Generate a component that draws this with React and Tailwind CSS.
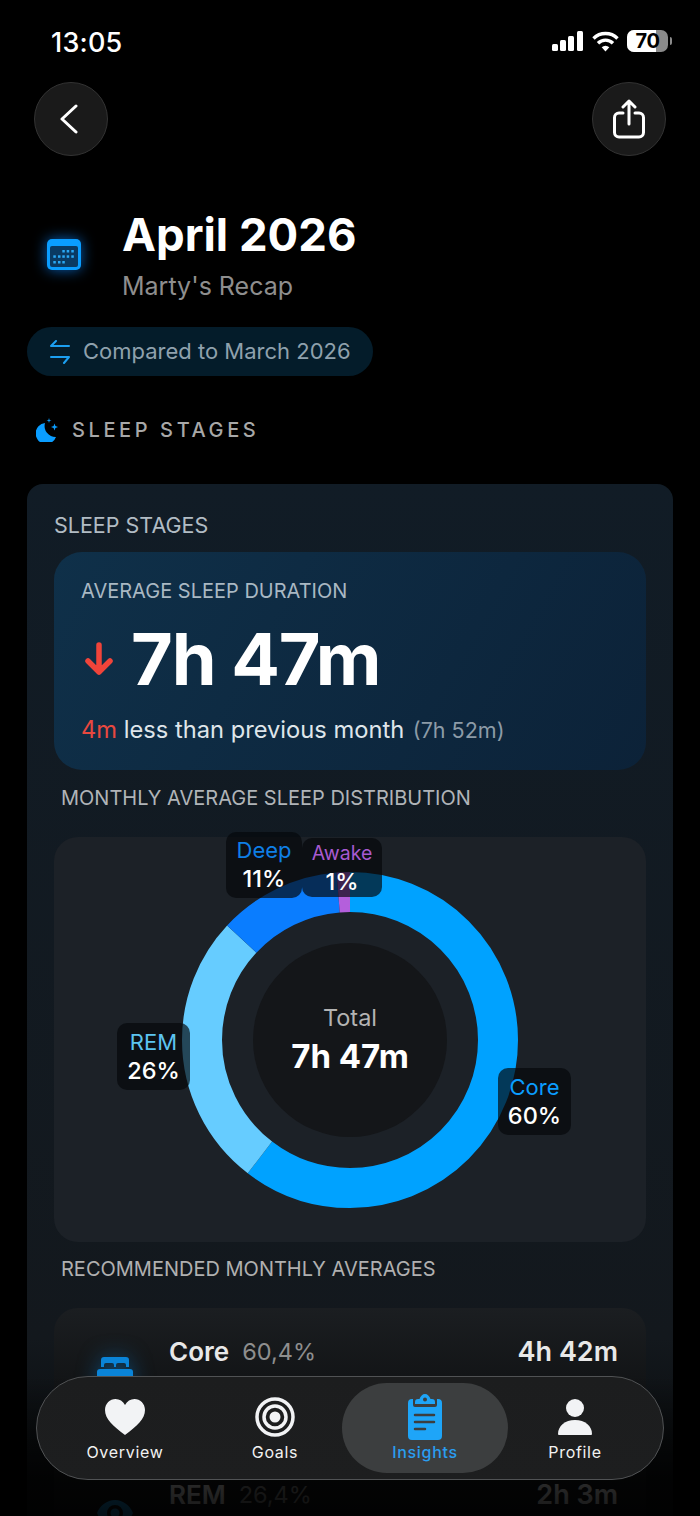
const ringSegments = [
  { color: "#00a2ff", start: 0, end: 217.5 },
  { color: "#66ccff", start: 217.5, end: 313 },
  { color: "#0a7dff", start: 313, end: 355.4 },
  { color: "#b45fdc", start: 355.4, end: 360 },
];

const calendarDots = [
  [16.3, 12], [20.7, 12], [25.3, 12],
  [7.3, 17.3], [12, 17.3], [16.3, 17.3], [20.7, 17.3], [25.3, 17.3],
  [7.3, 23], [12, 23], [16.3, 23],
];

function StatusBar() {
  return (
    <div className="h-[82px] flex items-start justify-between pl-[51px] pr-[28px] pt-[25px]">
      <span className="text-[27px] leading-[36px] font-medium text-white tracking-[0.2px]">13:05</span>
      <div className="flex items-center pt-[5px]">
        <svg width="31" height="20" viewBox="0 0 31 20" fill="white">
          <rect x="0" y="13" width="6" height="7" rx="1.500" />
          <rect x="8" y="9" width="6" height="11" rx="1.500" />
          <rect x="16" y="5" width="6" height="15" rx="1.500" />
          <rect x="25" y="0" width="6" height="20" rx="1.500" />
        </svg>
        <svg className="ml-[9px]" width="27" height="21" viewBox="0 0 27 21" fill="none" stroke="white" strokeWidth="3.400">
          <path d="M1.500 7.500a17 17 0 0 1 24 0" />
          <path d="M6 12.200a10.600 10.600 0 0 1 15 0" />
          <path d="M13.500 20.500l-3.800-4.200a5.400 5.400 0 0 1 7.600 0z" fill="white" stroke="none" />
        </svg>
        <div className="relative w-[41px] h-[22px] ml-[8px] rounded-[7px] overflow-hidden bg-[#8a8a8a] flex">
          <div className="w-[29px] h-full bg-white" />
          <span className="absolute inset-0 flex items-center justify-center text-[20px] font-bold text-black tracking-[-0.5px]">70</span>
        </div>
        <div className="w-[2px] h-[8px] ml-[2px] rounded-r bg-[#8a8a8a]" />
      </div>
    </div>
  );
}

function CircleButton({ children }) {
  return (
    <div className="w-[74px] h-[74px] rounded-full bg-[#1a1a1a] border border-[#333333] flex items-center justify-center">
      {children}
    </div>
  );
}

function CalendarIcon() {
  return (
    <svg className="drop-shadow-[0_0_7px_rgba(10,132,255,0.7)]" width="34" height="31" viewBox="0 0 34 31">
      <rect width="34" height="31" rx="5" fill="#0a9dff" />
      <rect x="3" y="7" width="28" height="21" rx="2" fill="#0a3a63" />
      {calendarDots.map(([x, y]) => (
        <rect key={`${x}-${y}`} x={x - 1} y={y - 1} width="2.500" height="2.500" fill="#2aa8f5" />
      ))}
    </svg>
  );
}

function Donut() {
  return (
    <svg width="340" height="340" viewBox="0 0 340 340">
      <circle cx="170" cy="170" r="97" fill="#141619" />
      {ringSegments.map((s) => (
        <circle
          key={s.color}
          cx="170"
          cy="170"
          r="148"
          fill="none"
          stroke={s.color}
          strokeWidth="40"
          pathLength="360"
          strokeDasharray={`${s.end - s.start} 360`}
          strokeDashoffset={-s.start}
          transform="rotate(-90 170 170)"
        />
      ))}
    </svg>
  );
}

function ChartLabel({ name, value, color, className }) {
  return (
    <div className={`absolute rounded-[10px] bg-[rgba(5,8,10,0.68)] flex flex-col items-center justify-center ${className}`}>
      <span className={`leading-[28px] ${color}`}>{name}</span>
      <span className="text-[23.500px] leading-[30px] font-medium text-white">{value}</span>
    </div>
  );
}

function NavItem({ label, active, children }) {
  return (
    <div className={`h-[90px] flex flex-col items-center justify-center ${active ? "w-[166px] -mx-[8px] rounded-full bg-[#3c3e3f]" : "w-[150px]"}`}>
      <div className="h-[48px] flex items-center justify-center">{children}</div>
      <span className={`text-[16px] leading-[22px] tracking-[0.7px] ${active ? "font-medium text-[#2a9df0]" : "text-[#f2f2f2]"}`}>
        {label}
      </span>
    </div>
  );
}

function BedIcon() {
  return (
    <svg className="drop-shadow-[0_0_10px_rgba(10,132,216,0.5)]" width="36" height="30" viewBox="0 0 36 30" fill="#0a84d8">
      <path d="M4 3a3 3 0 0 1 3-3h22a3 3 0 0 1 3 3v7h-3V8a2 2 0 0 0-2-2h-6a2 2 0 0 0-2 2v2h-2V8a2 2 0 0 0-2-2H9a2 2 0 0 0-2 2v2H4z" />
      <path d="M3 12h30a3 3 0 0 1 3 3v15H0V15a3 3 0 0 1 3-3z" />
    </svg>
  );
}

function App() {
  return (
    <div className="relative w-[700px] h-[1516px] overflow-hidden bg-black font-['Inter',sans-serif]">
      <StatusBar />

      <div className="flex justify-between px-[34px]">
        <CircleButton>
          <svg width="22" height="32" viewBox="0 0 22 32" fill="none" stroke="white" strokeWidth="3" strokeLinecap="round" strokeLinejoin="round">
            <path d="M16 3L2 16l14 13" />
          </svg>
        </CircleButton>
        <CircleButton>
          <svg width="32" height="40" viewBox="0 0 32 40" fill="none" stroke="white" strokeWidth="3" strokeLinecap="round" strokeLinejoin="round">
            <path d="M10 14H6a4.500 4.500 0 0 0-4.500 4.500v15A4.500 4.500 0 0 0 6 38h20a4.500 4.500 0 0 0 4.500-4.500v-15A4.500 4.500 0 0 0 26 14h-4" />
            <path d="M16 25V2M10 8l6-6 6 6" />
          </svg>
        </CircleButton>
      </div>

      <div className="flex items-center pl-[47px] gap-[41px] mt-[48px]">
        <CalendarIcon />
        <div>
          <div className="text-[45.500px] leading-[62px] font-bold text-white">April 2026</div>
          <div className="mt-[2px] text-[25px] leading-[36px] text-[#8e8e8e]">Marty's Recap</div>
        </div>
      </div>

      <div className="ml-[27px] mt-[23px] w-[346px] h-[49px] rounded-full bg-[#041c2a] flex items-center pl-[22px] gap-[12px]">
        <svg width="22" height="24" viewBox="0 0 22 24" fill="none" stroke="#1c9ff0" strokeWidth="2" strokeLinecap="round" strokeLinejoin="round">
          <path d="M20 6H2l5-5M2 17h18l-5 6" />
        </svg>
        <span className="text-[22px] text-[#8fa1ad]">Compared to March 2026</span>
      </div>

      <div className="flex items-center ml-[36px] mt-[38px] h-[32px] gap-[14px]">
        <svg width="22" height="24" viewBox="0 0 22 24" fill="#0a9dff">
          <path d="M9 5A10.500 10.500 0 1 0 20 19A11 11 0 0 1 9 5z" />
          <path d="M13 0l.6 1.900 1.900.6-1.900.6-.6 1.900-.6-1.900-1.900-.6 1.900-.6zM18.500 5.500l.9 2.600 2.600.9-2.600.9-.9 2.600-.9-2.600-2.600-.9 2.600-.9z" />
        </svg>
        <span className="text-[20px] font-medium tracking-[3.600px] text-[#a8a8a8]">SLEEP STAGES</span>
      </div>

      <div className="mt-[38px] mx-[27px] rounded-t-[16px] bg-[linear-gradient(180deg,#111c26,#13181d_76%,#0b0e10_86%)] px-[27px] pt-[27px]">
        <div className="text-[21.500px] leading-[28px] text-[#b2bcc4]">SLEEP STAGES</div>

        <div className="mt-[13px] h-[218px] rounded-[28px] bg-[linear-gradient(120deg,#0f3049,#0c2238)] pl-[27px] pt-[26px]">
          <div className="text-[20px] leading-[26px] text-[#a9b8c3]">AVERAGE SLEEP DURATION</div>
          <div className="flex items-center mt-[16px] h-[78px]">
            <svg className="ml-[3px]" width="30" height="34" viewBox="0 0 30 34" fill="none" stroke="#f0443a" strokeWidth="5.500" strokeLinecap="round" strokeLinejoin="round">
              <path d="M15 3v27M4 19l11 11 11-11" />
            </svg>
            <span className="ml-[17px] text-[72px] leading-[78px] font-bold text-white tracking-[-1.200px]">7h 47m</span>
          </div>
          <div className="mt-[17px] text-[23.700px] leading-[30px] text-[#dfe5ea]">
            <span className="text-[#e8483f]">4m</span> less than previous month{" "}
            <span className="text-[#8c9ba7] ml-[2px] text-[21.500px]">(7h 52m)</span>
          </div>
        </div>

        <div className="mt-[15px] pl-[7px] text-[20px] leading-[26px] text-[#b0b4b8]">MONTHLY AVERAGE SLEEP DISTRIBUTION</div>

        <div className="relative mt-[26px] h-[405px] rounded-[24px] bg-[#1c2127] flex items-center justify-center">
          <div className="relative">
            <Donut />
            <div className="absolute inset-0 flex flex-col items-center justify-center">
              <span className="text-[23.500px] leading-[32px] text-[#b3b3b3]">Total</span>
              <span className="text-[33px] leading-[44px] font-bold text-white">7h 47m</span>
            </div>
          </div>
          <ChartLabel name="Deep" value="11%" color="text-[22px] text-[#0f7fe6]" className="left-[172px] -top-[5px] w-[76px] h-[66px]" />
          <ChartLabel name="Awake" value="1%" color="text-[19.500px] text-[#a85ad0]" className="left-[248px] top-[1px] w-[80px] h-[59px]" />
          <ChartLabel name="REM" value="26%" color="text-[22px] text-[#5cc4f0]" className="left-[63px] top-[186px] w-[73px] h-[67px]" />
          <ChartLabel name="Core" value="60%" color="text-[22px] text-[#0a9dff]" className="left-[444px] top-[231px] w-[73px] h-[67px]" />
        </div>

        <div className="mt-[14px] pl-[7px] text-[20px] leading-[26px] text-[#b0b0b0]">RECOMMENDED MONTHLY AVERAGES</div>

        <div className="mt-[26px] h-[300px] rounded-[24px] bg-[linear-gradient(180deg,#1b1e21,#121416_25%)] pl-[26px] pr-[28px] pt-[26px]">
          <div className="flex items-start h-[143px]">
            <div className="w-[90px] pl-[17px] pt-[23px]"><BedIcon /></div>
            <span className="-ml-[1px] text-[26px] leading-[36px] font-semibold text-[#e8e8e8]">Core</span>
            <span className="ml-[13px] text-[23.500px] leading-[36px] text-[#8e8e8e]">60,4%</span>
            <span className="ml-auto text-[27px] leading-[36px] font-semibold text-[#e8e8e8]">4h 42m</span>
          </div>
          <div className="flex items-start">
            <div className="w-[90px] pl-[17px] pt-[23px]">
              <svg width="36" height="26" viewBox="0 0 36 26" fill="#1aa0ea">
                <path fillRule="evenodd" d="M18 0c8 0 15 5.500 18 13-3 7.500-10 13-18 13S3 20.500 0 13C3 5.500 10 0 18 0zm0 5a8 8 0 1 0 0 16 8 8 0 0 0 0-16z" />
                <circle cx="18" cy="13" r="4.500" />
              </svg>
            </div>
            <span className="-ml-[1px] text-[26px] leading-[36px] font-semibold text-[#e8e8e8]">REM</span>
            <span className="ml-[13px] text-[23.500px] leading-[36px] text-[#8e8e8e]">26,4%</span>
            <span className="ml-auto text-[27px] leading-[36px] font-semibold text-[#e8e8e8]">2h 3m</span>
          </div>
        </div>
      </div>

      {/* fade behind the tab bar */}
      <div className="absolute inset-x-0 bottom-0 h-[140px] bg-[linear-gradient(180deg,rgba(0,0,0,0),rgba(0,0,0,0.82)_74%,rgba(0,0,0,0.9))]" />

      <div className="absolute left-[36px] top-[1376px] w-[628px] h-[104px] rounded-full border border-[#505254] bg-[linear-gradient(180deg,#1c1d1e,#1d1e1f)] flex items-center pl-[13px]">
        <NavItem label="Overview">
          <svg width="40" height="36" viewBox="0 0 40 36" fill="#f2f3f5">
            <path d="M20 36C8 27 0 20 0 11 0 4.500 5 0 10.500 0 14.500 0 18 2 20 6c2-4 5.500-6 9.500-6C35 0 40 4.500 40 11c0 9-8 16-20 25z" />
          </svg>
        </NavItem>
        <NavItem label="Goals">
          <svg width="40" height="40" viewBox="0 0 40 40" fill="none" stroke="#f2f3f5" strokeWidth="3.500">
            <circle cx="20" cy="20" r="18" />
            <circle cx="20" cy="20" r="11" />
            <circle cx="20" cy="20" r="5.500" fill="#f2f3f5" stroke="none" />
          </svg>
        </NavItem>
        <NavItem label="Insights" active>
          <svg width="34" height="46" viewBox="0 0 34 46" fill="#1ea5f8">
            <path fillRule="evenodd" d="M10 5h1.500C12.500 2 14.500 0 17 0s4.500 2 5.500 5H24a3 3 0 0 1 3 3v2H7V8a3 3 0 0 1 3-3zm7-1.500a2 2 0 1 0 0 4 2 2 0 0 0 0-4z" />
            <path d="M4 5h1v6a2 2 0 0 0 2 2h20a2 2 0 0 0 2-2V5h1a4 4 0 0 1 4 4v33a4 4 0 0 1-4 4H4a4 4 0 0 1-4-4V9a4 4 0 0 1 4-4z" />
            <path d="M7 21h19M7 28h19M7 35h10" stroke="#3c3e3f" strokeWidth="2.500" strokeLinecap="round" />
          </svg>
        </NavItem>
        <NavItem label="Profile">
          <svg width="34" height="36" viewBox="0 0 34 36" fill="#f2f3f5">
            <circle cx="17" cy="9" r="9" />
            <path d="M0 35c0-8 7-14 17-14s17 6 17 14a1 1 0 0 1-1 1H1a1 1 0 0 1-1-1z" />
          </svg>
        </NavItem>
      </div>
    </div>
  );
}

export default App;
